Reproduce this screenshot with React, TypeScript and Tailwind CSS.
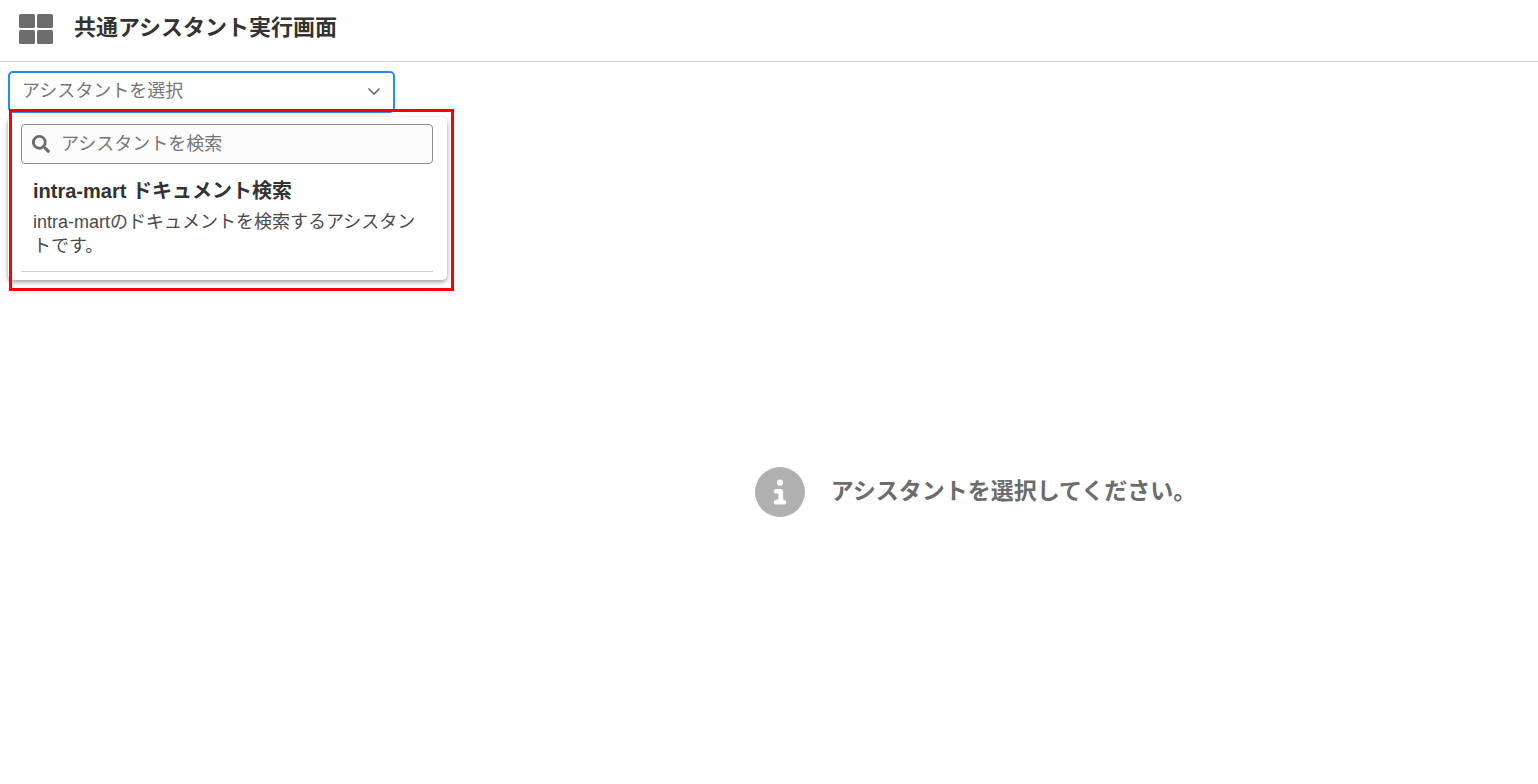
import React, { useState } from "react";
import { FaSearch } from "react-icons/fa";
import { FaCircleInfo } from "react-icons/fa6";

type Assistant = { name: string; description: string };

const assistants: Assistant[] = [
  {
    name: "intra-mart ドキュメント検索",
    description: "intra-martのドキュメントを検索するアシスタントです。",
  },
];

function GridIcon() {
  return (
    <svg aria-hidden="true" viewBox="0 0 34 30" className="h-[30px] w-[34px] shrink-0 fill-[#6c6c6c]">
      <rect x="0" y="0" width="16" height="14" rx="1.5" />
      <rect x="18" y="0" width="16" height="14" rx="1.5" />
      <rect x="0" y="16" width="16" height="14" rx="1.5" />
      <rect x="18" y="16" width="16" height="14" rx="1.5" />
    </svg>
  );
}

function Header() {
  return (
    <header className="flex h-[62px] items-center gap-[21px] border-b border-[#d0d0d0] px-[19px] pb-1">
      <GridIcon />
      <h1 className="pb-0.5 text-[22px] leading-8 font-bold text-[#333]">共通アシスタント実行画面</h1>
    </header>
  );
}

function AssistantPicker() {
  const [query, setQuery] = useState("");
  const matches = assistants.filter((a) => a.name.includes(query));

  return (
    <div className="relative w-[387px]">
      <button
        type="button"
        aria-haspopup="listbox"
        aria-expanded="true"
        className="flex h-[42px] w-full items-center justify-between rounded-[5px] border-2 border-[#2a87f5] bg-white px-3 pb-0.5 text-[18px] leading-6 text-[#757575]"
      >
        アシスタントを選択
        <svg aria-hidden="true" viewBox="0 0 14 10" className="h-[10px] w-[14px] fill-none stroke-[#6c6c6c] stroke-[1.6]">
          <path d="M1.5 2.5 7 8 12.5 2.5" />
        </svg>
      </button>

      <div className="absolute top-[46px] left-0 w-[439px] rounded-[5px] bg-white pt-[7px] pr-[14px] pb-2 pl-[13px] shadow-[0_2px_5px_rgba(0,0,0,0.4)]">
        <label className="flex h-10 items-center gap-[11px] rounded-[4px] border border-[#8c8c8c] bg-[#fcfcfc] px-[10px]">
          <FaSearch aria-hidden="true" className="size-[18px] shrink-0 text-[#6c6c6c]" />
          <input
            type="text"
            aria-label="アシスタントを検索"
            placeholder="アシスタントを検索"
            value={query}
            onChange={(e) => setQuery(e.target.value)}
            className="min-w-0 flex-1 bg-transparent text-[18px] leading-6 text-[#333] outline-none placeholder:text-[#757575]"
          />
        </label>
        <ul>
          {matches.map((a) => (
            <li key={a.name} className="border-b border-[#d0d0d0]">
              <button type="button" className="block w-full px-3 pt-[11px] pb-[13px] text-left">
                <span className="block text-[20px] leading-8 font-bold text-[#333]">{a.name}</span>
                <span className="block pt-[3px] text-[18px] leading-6 text-[#4a4a4a]">{a.description}</span>
              </button>
            </li>
          ))}
        </ul>
      </div>

      <div className="pointer-events-none absolute top-[38px] left-[1px] h-[182px] w-[445px] border-3 border-[#ff0000]" />
    </div>
  );
}

export default function App() {
  return (
    <div className="flex min-h-screen flex-col bg-white font-['Liberation_Sans','Noto_Sans_CJK_JP',sans-serif]">
      <Header />
      <div className="flex flex-1">
        <aside className="pt-[9px] pr-[18px] pl-2">
          <AssistantPicker />
        </aside>
        <main className="flex flex-1 items-center justify-center gap-[26px] pt-[138px]">
          <FaCircleInfo aria-hidden="true" className="size-[50px] shrink-0 text-[#b0b0b0]" />
          <p className="pb-0.5 text-[23px] leading-8 font-bold text-[#6c6c6c]">アシスタントを選択してください。</p>
        </main>
      </div>
    </div>
  );
}
